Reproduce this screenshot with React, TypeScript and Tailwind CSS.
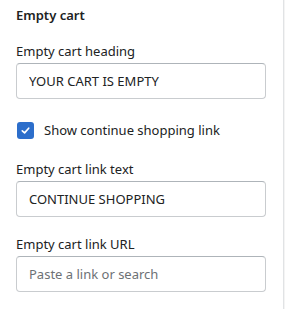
export default function App() {
  return (
    <div
      className="flex min-h-[309px] w-[285px] bg-white text-[13px] text-[#202223]"
      style={{ fontFamily: '"Segoe UI", "Noto Sans", sans-serif' }}
    >
      <div className="w-[283px] px-4 pt-[5px]">
        <h2 className="leading-5 font-semibold">Empty cart</h2>

        <div className="mt-4">
          <label className="mb-[2px] block leading-5">Empty cart heading</label>
          <input
            className="h-9 w-[250px] rounded-[4px] border border-[#c9cccf] border-t-[#aeb4b9] px-3 text-[13px] text-[#202223] outline-none"
            defaultValue="YOUR CART IS EMPTY"
          />
        </div>

        <label className="mt-[21px] flex items-center gap-[10px]">
          <span className="ml-[1px] flex h-[17px] w-[17px] items-center justify-center rounded-[3px] bg-[#2c6ecb]">
            <svg width="11" height="11" viewBox="0 0 12 12" fill="none">
              <path d="M2.5 6.3 L5 8.6 L9.5 3.5" stroke="white" strokeWidth="1.8" strokeLinecap="round" strokeLinejoin="round" />
            </svg>
          </span>
          <span className="leading-5">Show continue shopping link</span>
        </label>

        <div className="mt-[19px]">
          <label className="mb-[2px] block leading-5">Empty cart link text</label>
          <input
            className="h-9 w-[250px] rounded-[4px] border border-[#c9cccf] border-t-[#aeb4b9] px-3 text-[13px] text-[#202223] outline-none"
            defaultValue="CONTINUE SHOPPING"
          />
        </div>

        <div className="mt-[17px]">
          <label className="mb-[2px] block leading-5">Empty cart link URL</label>
          <input
            className="h-9 w-[250px] rounded-[4px] border border-[#c9cccf] border-t-[#aeb4b9] px-3 text-[13px] text-[#202223] outline-none placeholder:text-[#6d7175]"
            placeholder="Paste a link or search"
          />
        </div>
      </div>
      <div className="flex-1 border-l border-[#e1e3e5] bg-[#f4f4f4]" />
    </div>
  );
}
